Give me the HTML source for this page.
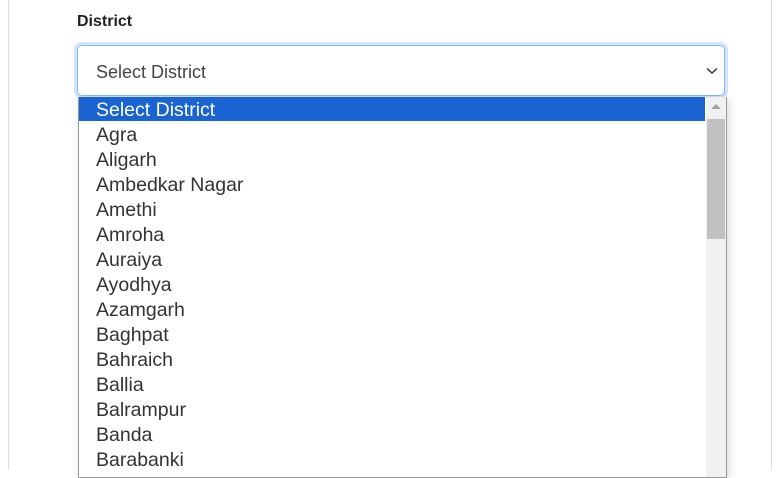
<!DOCTYPE html><html><head><style>
body{margin:0;width:780px;height:470px;overflow:hidden;background:#fff;font-family:"Liberation Sans",sans-serif;position:relative}
.pl{position:absolute;top:0;bottom:0;width:1px;background:#dedede}
.lbl{position:absolute;left:77px;top:13px;font-size:16px;font-weight:bold;color:#222}
.sel{position:absolute;left:77px;top:45px;width:646px;height:49px;border:1.5px solid #86b7fe;border-radius:5px;box-shadow:0 0 0 3px #d5e4fb}
.sel span{position:absolute;left:18px;top:16px;font-size:18px;color:#444}
.list{position:absolute;left:78px;top:97px;width:647px;height:380px;border:1px solid #999;border-top:none;background:#fff;box-shadow:2px 2px 8px rgba(0,0,0,.15)}
.row{height:25px;line-height:29px;padding-left:17px;font-size:19.5px;color:#333}
.hl{background:#1a63d3;color:#fff;width:609px;height:24px;line-height:26px}
.sb{position:absolute;right:0;top:0;width:20px;height:100%;background:#f1f1f1}
.th{position:absolute;left:1px;right:1px;top:22px;height:120px;background:#c1c1c1}
.ar{position:absolute;left:5px;top:7px;width:0;height:0;border-left:5px solid transparent;border-right:5px solid transparent;border-bottom:5px solid #a3a3a3}
</style></head><body>
<div class="pl" style="left:8px"></div><div class="pl" style="left:771px"></div>
<div class="lbl">District</div>
<div class="sel"><span>Select District</span>
<svg style="position:absolute;right:6px;top:21px" width="12" height="8" viewBox="0 0 12 8"><path d="M1 1.5 L6 6 L11 1.5" fill="none" stroke="#333" stroke-width="1.5"/></svg></div>
<div class="list">
<div class="row hl">Select District</div>
<div class="row">Agra</div><div class="row">Aligarh</div><div class="row">Ambedkar Nagar</div><div class="row">Amethi</div><div class="row">Amroha</div><div class="row">Auraiya</div><div class="row">Ayodhya</div><div class="row">Azamgarh</div><div class="row">Baghpat</div><div class="row">Bahraich</div><div class="row">Ballia</div><div class="row">Balrampur</div><div class="row">Banda</div><div class="row">Barabanki</div>
<div class="sb"><div class="ar"></div><div class="th"></div></div>
</div>
</body></html>
